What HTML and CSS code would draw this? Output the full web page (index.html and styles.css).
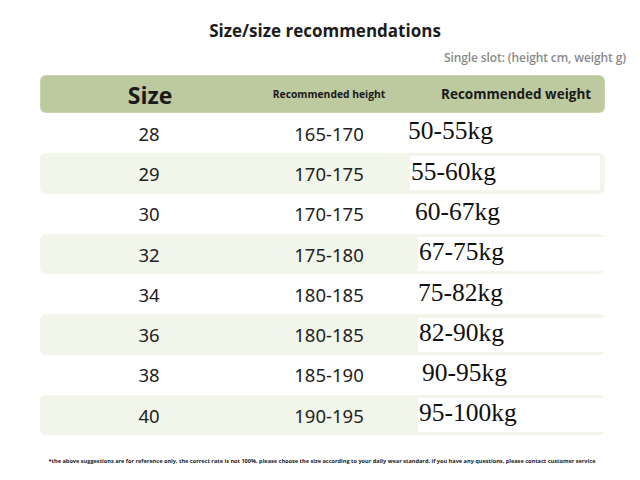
FILE: index.html
```html
<!DOCTYPE html>
<html>
<head>
<meta charset="utf-8">
<link rel="stylesheet" href="styles.css">
</head>
<body>
<div class="page">
  <h1 class="title">Size/size recommendations</h1>
  <div class="note">Single slot: (height cm, weight g)</div>
  <div class="table">
    <div class="head">
      <div class="h-size">Size</div>
      <div class="h-height">Recommended height</div>
      <div class="h-weight">Recommended weight</div>
    </div>
    <div class="row"><div class="c-size">28</div><div class="c-height">165-170</div><div class="c-weight"><span class="w w-a">50-55kg</span></div></div>
    <div class="row band"><div class="c-size">29</div><div class="c-height">170-175</div><div class="c-weight box box-a"><span class="w">55-60kg</span></div></div>
    <div class="row"><div class="c-size">30</div><div class="c-height">170-175</div><div class="c-weight"><span class="w w-c">60-67kg</span></div></div>
    <div class="row band"><div class="c-size">32</div><div class="c-height">175-180</div><div class="c-weight box"><span class="w">67-75kg</span></div></div>
    <div class="row"><div class="c-size">34</div><div class="c-height">180-185</div><div class="c-weight"><span class="w w-d">75-82kg</span></div></div>
    <div class="row band"><div class="c-size">36</div><div class="c-height">180-185</div><div class="c-weight box"><span class="w">82-90kg</span></div></div>
    <div class="row"><div class="c-size">38</div><div class="c-height">185-190</div><div class="c-weight"><span class="w w-e">90-95kg</span></div></div>
    <div class="row band"><div class="c-size">40</div><div class="c-height">190-195</div><div class="c-weight box"><span class="w">95-100kg</span></div></div>
  </div>
  <p class="foot">*the above suggestions are for reference only, the correct rate is not 100%, please choose the size according to your daily wear standard, if you have any questions, please contact customer service</p>
</div>
</body>
</html>
```
FILE: styles.css
```css
html, body {
  margin: 0;
  padding: 0;
  background: #ffffff;
}
.page {
  width: 640px;
  height: 480px;
  font-family: "Open Sans", "Noto Sans", sans-serif;
  color: #1a1a1a;
}
.title {
  margin: 0;
  padding-top: 19px;
  text-align: center;
  font-size: 17px;
  font-weight: 700;
  line-height: 24px;
  color: #1c1c1c;
  padding-left: 10px;
}
.note {
  text-align: right;
  padding-right: 14px;
  margin-top: 8px;
  font-size: 12px;
  font-weight: 600;
  color: #8a8a8a;
  line-height: 14px;
  letter-spacing: -0.1px;
}
.table {
  margin: 10px 35px 0 40px;
}
.head {
  display: grid;
  grid-template-columns: 218px 144px 1fr;
  align-items: center;
  height: 36px;
  background: #bdc99e;
  border: 1px dotted #d8e0c4;
  border-radius: 6px;
}
.h-size {
  text-align: center;
  font-size: 23px;
  font-weight: 700;
  color: #1a1a1a;
  padding-top: 1px;
}
.h-height {
  text-align: center;
  font-size: 10.3px;
  font-weight: 700;
  padding-right: 4px;
}
.h-weight {
  font-size: 13.5px;
  font-weight: 700;
  padding-left: 38px;
  white-space: nowrap;
}
.row {
  display: grid;
  grid-template-columns: 218px 144px 1fr;
  align-items: center;
  height: 40.3px;
}
.head + .row {
  margin-top: 0;
}
.row.band {
  background: #f1f5ea;
  border-radius: 6px;
}
.c-size, .c-height {
  text-align: center;
  font-family: "Noto Sans", "Open Sans", sans-serif;
  font-size: 18.5px;
  color: #222;
}
.c-height {
  padding-right: 2px;
}
.c-weight {
  height: 100%;
  display: flex;
  align-items: center;
}
.c-weight.box {
  height: 34px;
  background: #ffffff;
  margin-left: 16px;
}
.c-weight.box-a {
  margin-left: 8px;
  margin-right: 5px;
}
.w {
  font-family: "Liberation Serif", "Times New Roman", serif;
  font-size: 25.5px;
  color: #111;
  padding-left: 1px;
  line-height: 1;
  margin-top: -4px;
}
.w-a { padding-left: 6px; }
.w-c { padding-left: 13px; }
.w-d { padding-left: 16px; }
.w-e { padding-left: 20px; }
.foot {
  margin: 22px 0 0 0;
  text-align: center;
  font-size: 5.6px;
  font-weight: 700;
  color: #222;
  white-space: nowrap;
  padding-left: 4px;
}
```
